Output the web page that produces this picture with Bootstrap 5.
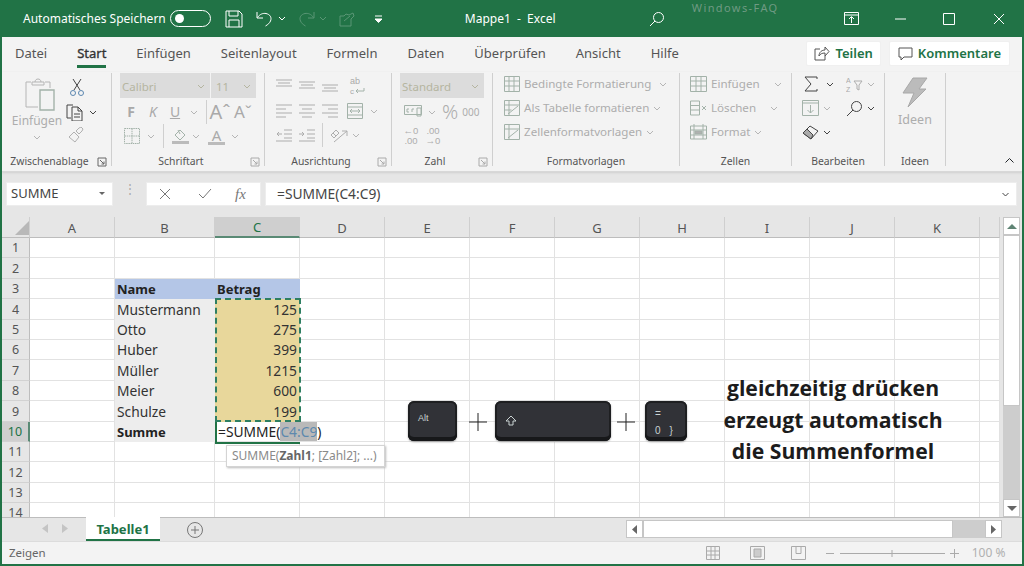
<!DOCTYPE html>
<html lang="de"><head><meta charset="utf-8"><title>Mappe1 - Excel</title>
<link href="https://cdn.jsdelivr.net/npm/bootstrap@5.3.0/dist/css/bootstrap.min.css" rel="stylesheet">
<style>
html,body{margin:0;width:1024px;height:566px;overflow:hidden;background:#e6e6e6}
body{font-family:"Noto Sans","Open Sans",sans-serif;font-size:13px;color:#444}
svg{flex:none;display:block;fill:none;stroke:currentColor;stroke-width:1}
.app{position:relative;width:1024px;height:566px;border:solid #217346;border-width:0 2px 2px 2px;overflow:hidden;background:#e6e6e6}
.tbar{height:37px;margin:0 -2px;background:#217346;color:#fff;padding-left:23px;font-size:12px}
.tgl{width:41px;height:17px;border:1px solid #fff;border-radius:9px;margin:0 14px 0 4px;padding-left:4px}
.knob{width:9px;height:9px;border-radius:50%;background:#fff}
.ttl{width:92px;margin:0 92px 0 82px;white-space:nowrap}
.wm{font-size:11px;letter-spacing:1.4px;width:92px;margin:-22px 60px 0 27px;color:#6f9a83;line-height:15px}
.tabs{height:35px;background:#f3f3f3;padding:0 12px 0 13px;gap:30px}
.tabs .nav-link{padding:0;color:#555;font-size:13px;line-height:19px;height:24px;margin-top:7px;border-bottom:3px solid transparent}
.tabs .nav-link.active{color:#333;border-bottom-color:#217346;-webkit-text-stroke:.35px #333}
.shr{background:#fff;border:1px solid #f0f0f0;border-radius:2px;color:#217346;font-size:13px;font-weight:600;height:25px;padding:0 8px;line-height:23px;display:flex;align-items:center;gap:5px}
.shr:hover{background:#fff;color:#217346}
.shr7{padding:0 7px}
.shgap{gap:8px;margin-top:4px}
.shic{color:#555}
.rib{height:100px;background:#f3f3f3;padding-top:1px;border-bottom:1px solid #d8d8d8;box-shadow:0 1px 2px #cfcfcf;position:relative}
.rgr{height:93px;border-right:1px solid #cfcfcf;display:flex;flex-direction:column;flex:none}
.g1{width:110px}.g2{width:153px;padding-left:8px}.g3{width:127px;padding-left:11px}.g4{width:101px;padding-left:8px}
.g5{width:187px;padding-left:11px}.g6{width:112px;padding-left:10px}.g7{width:93px}.g8{width:61px}
.rbd{flex:1 1 auto;min-height:0}
.up1{margin-top:-1px}
.rlb{display:flex;align-items:center;height:16px;margin-bottom:-4px;font-size:10.4px;color:#555;flex:none;margin-left:-8px}
.g1 .rlb,.g7 .rlb,.g8 .rlb{margin-left:0}.g3 .rlb{margin-left:-11px}.g5 .rlb{margin-left:-11px}.g6 .rlb{margin-left:-10px}
.rlb span{flex:1;text-align:center}
.lnc{margin-right:4px;color:#aaa;width:10px}
.lnd{color:#666}
.rr{display:flex;align-items:center;height:24px}
.mt2x{margin-top:2px}
.slc{height:25px;background:#dcdcdc;display:flex;align-items:center;justify-content:space-between;color:#b5b5a0;font-size:11.5px;padding:2px 5px 0 2px}
.fnt{width:90px;margin-right:1px}.fsz{width:45px;padding-left:5px}.std{width:84px;padding-left:2px}
.dis{color:#adadad}.ich{color:#a3b2a9}.brh{color:#b0b0b0}
.gl{color:#a9a9a9;width:22px;text-align:center;font-size:14px;line-height:20px}
.gla{font-size:20px;margin-left:2px}.glb{font-size:17px;margin-left:1px}
.sep{width:1px;height:24px;background:#cfcfcf;flex:none}
.chv{color:#b5b5b5}.chd{color:#444}
.tx{font-size:11.6px;color:#adadad;white-space:nowrap;margin-left:4px}
.pcol{width:60px;padding-left:10px}
.pic{margin:5px 0 0 6px}
.ptx{margin-top:1px;line-height:18px;font-size:12px}
.m5t{margin-top:5px}
.ctcol{margin-top:5px}
.cpr{margin-top:7px;gap:5px}
.brs{margin:6px 0 0 2px}
.flbar{height:3px;width:17px;background:#bbb}
.fca{margin-left:8px;width:17px;color:#aaa;font-size:15px;line-height:14px}
.pct{font-size:20px;line-height:20px;font-weight:300;margin-left:-1px}
.mil{font-size:10px;margin-left:4px}
.dec{font:9.5px/10.5px "Liberation Sans",sans-serif;width:22px;text-align:center}
.ide{font-size:12.5px;margin-top:3px}
.col38{width:38px}
.pl4{padding-left:4px}.pl2{padding-left:2px}
.g7 .rbd{padding-left:8px}
.fbar{height:45px;padding:10px 0 0 4px;background:#e6e6e6;align-items:flex-start}
.fbx{height:24px;background:#fff;border:1px solid #ededed;display:flex;align-items:center;flex:none}
.nmb{width:107px;padding:0 7px 0 4px;justify-content:space-between;color:#444}
.dts{width:33px;color:#aaa;font-size:12px;text-align:center;line-height:5px;padding-top:4px;flex:none}
.fxb{width:115px;padding-left:12px;color:#777}
.fxt{font:italic 15px "Liberation Serif",serif;margin-left:23px}
.fxk{margin-left:27px}
.fml{width:752px;margin-left:4px;padding:0 6px 0 11px;justify-content:space-between;color:#444;font-size:13.8px}
.gwrap{height:300px;background:#e6e6e6;overflow:hidden}
.sheet{table-layout:fixed;border-collapse:separate;border-spacing:0;width:998px;background:#fff;flex:none;font-size:13.8px;align-self:flex-start}
.sheet th,.sheet td{padding:1px 0 0;overflow:visible;white-space:nowrap;border-right:1px solid #e2e2e2;border-bottom:1px solid #e2e2e2;line-height:18px;color:#333}
.sheet thead th{background:#e6e6e6;height:21px;font-weight:400;text-align:center;color:#555;border-right:1px solid #cfcfcf;border-bottom:1px solid #bdbdbd;font-size:13px}
.sheet tbody th{background:#e6e6e6;font-weight:400;text-align:center;color:#555;border-right:1px solid #bdbdbd;border-bottom:1px solid #d2d2d2;font-size:12.5px}
.sheet thead th.acc{background:#cfcfcf;color:#217346;border-bottom:2px solid #5a8a75}
.sheet tbody th.acr{background:#cfcfcf;color:#217346;border-right:2px solid #5a8a75}
.cw28{width:28px}.cw85{width:85px}.cw100{width:100px}
.h20{height:20px}.h21{height:21px}
.crn{margin-left:13px}
.sheet .hdc{background:#b4c6e7;font-weight:700;padding-left:2px;border-color:#b4c6e7;color:#222;font-size:13px}
.sheet .nmc{background:#ededed;padding-left:2px;border-color:#ededed}
.sheet .nbd{font-weight:700;font-size:13px;color:#222}
.sheet .amt{background:#e8d79b;text-align:right;padding-right:2px;border-color:#e8d79b}
.vsb{width:17px;margin-left:3px;height:300px;background:#cdcdcd;display:flex;flex-direction:column;flex:none}
.sbb{background:#fff;border:1px solid #c6c6c6;display:flex;align-items:center;justify-content:center;flex:none}
.vbt{height:18px}.vth{height:171px;background:#fff;border:1px solid #c6c6c6;flex:none}
.sbar{height:24px;background:#e6e6e6;border-top:1px solid #bdbdbd}
.tarw{color:#bbb;width:20px;display:flex;justify-content:center;margin-top:6px}
.tar1{margin-left:33px}
.stab{width:74px;height:24px;margin:-1px 0 0 11px;background:#fff;border-bottom:2px solid #217346;color:#217346;font-weight:700;text-align:center;line-height:24px;flex:none;font-size:13px}
.pbt{margin:4px 0 0 27px;color:#777}
.hsb{display:flex;height:18px;width:376px;margin:2px 0 0 423px;background:#cdcdcd;flex:none}
.hsb .sbb{width:17px}.hth{width:310px;background:#fff;border:1px solid #c6c6c6;flex:none}
.stb{height:23px;background:#f3f3f3;border-top:1px solid #dcdcdc;color:#666;padding-left:7px;font-size:11.5px}
.stic{color:#aaa}
.sm1{margin-left:660px}.sm2{margin-left:30px}.sm3{margin-left:26px}.sm4{margin-left:20px}.sm5{margin-left:6px}.sm6{margin-left:5px}
.zpc{margin-left:13px;color:#b0b0b0;font-size:12px}
.ants{position:absolute;left:213px;top:298px;width:86px;height:124px;border:2px dashed #2f7f62}
.acell{position:absolute;left:213px;top:422px;width:111px;height:21px;white-space:nowrap;color:#222;font-size:13.8px;line-height:20px;padding-left:1px;border-left:2px solid #217346}
.acell::after{content:"";position:absolute;left:-2px;bottom:-1px;width:85px;height:2px;background:#217346}
.rng{background:#b9b9b9;color:#5d89ae}
.ttp{position:absolute;left:224px;top:445px;width:159px;height:22px;background:#fff;border:1px solid #d4d4d4;box-shadow:1px 1px 2px #bbb;font-size:12px;color:#8a8a8a;padding-left:5px;line-height:20px;white-space:nowrap}
.ttp b{color:#666}
.ky{position:absolute;top:401px;height:40px;background:#313237;border-radius:6px;box-shadow:0 1px 2px #999,inset 0 -4px 0 #17181a,inset 0 0 0 2px #1e1f21;color:#c9d2d2}
.k1{left:406px;width:49px;font:9px "Liberation Sans",sans-serif;padding:12px 0 0 10px}
.k2{left:493px;width:116px;padding:14px 0 0 10px}
.k3{left:643px;width:42px;font:10px "Liberation Sans",sans-serif;padding:6px 0 0 10px;line-height:14px}
.k3g{gap:9px;margin-top:3px}
.pls{position:absolute;top:413px;color:#222}
.p1{left:467px}.p2{left:615px}
.cpt{position:absolute;left:704px;top:372px;width:254px;color:#1c1c1c;font-family:"Open Sans",sans-serif;font-weight:700;font-size:21.2px;line-height:31.5px;text-align:center}
.rmar{margin-left:13px}.rma2{margin-left:11px}.rma3{margin-left:18px}.rm4{margin-left:4px}
.wm1{margin-left:36px}.wm2{margin-left:37px}.wm3{margin-left:38px}
.f3{opacity:.25}
.m12{margin:0 7px 0 6px}
.mg2{margin-left:2px}.mg3{margin-left:3px}.mg5{margin-left:6px}.mg8{margin-left:8px}.mg14{margin-left:14px}
.cb1{margin:0 8px 0 7px}
.cb2{margin:0 8px 0 4px}
.gap7{gap:7px}
.neg3{margin-left:-3px}
</style></head><body>
<svg width="0" height="0" class="position-absolute"><defs>
<symbol id="c" viewBox="0 0 8 5"><path d="M1 1l3 3 3-3"/></symbol>
<symbol id="l" viewBox="0 0 10 10"><path d="M1 1h8v8H1zM3 3l4 4M7 4.500V7H4.500"/></symbol>
</defs></svg>
<div class="app">
<div class="tbar d-flex align-items-center">
<span class="text-nowrap">Automatisches Speichern</span>
<div class="tgl d-flex align-items-center"><div class="knob"></div></div>
<svg width="18" height="18" viewBox="0 0 18 18"><path d="M1 1h13l3 3v13H1zM4 1v5h9V1M4 17v-7h10v7"/></svg>
<svg class="rmar" width="18" height="18" viewBox="0 0 18 18" stroke-width="1.300"><path d="M1 2v6h6M1.500 7.500C4 4 7 3 10 3.500c4 .8 6 4 4.500 7.500-.8 2-2.500 3.500-5 5"/></svg>
<svg class="rm4" width="8" height="5"><use href="#c"/></svg>
<svg class="rma2 f3" width="18" height="18" viewBox="0 0 18 18"><path d="M17 2v6h-6M16.500 7.500C14 4 11 3 8 3.500c-4 .8-6 4-4.500 7.500.8 2 2.500 3.500 5 5"/></svg>
<svg class="rm4 f3" width="8" height="5"><use href="#c"/></svg>
<svg class="rma2 f3" width="18" height="18" viewBox="0 0 18 18"><path d="M2 16V6h4l2-2 3 1 4-2 1 3-3 3v7zM6 11l6-5"/></svg>
<svg class="rma3" width="9" height="8" viewBox="0 0 9 8"><path d="M1 1h7"/><path d="M1 4h7L4.500 7.500z" fill="#fff"/></svg>
<span class="ttl">Mappe1&nbsp; - &nbsp;Excel</span>
<svg width="16" height="16" viewBox="0 0 16 16"><circle cx="9.500" cy="6.500" r="5"/><path d="M6 10l-5 5"/></svg>
<span class="wm text-nowrap">Windows-FAQ</span>
<svg width="15" height="13" viewBox="0 0 15 13"><path d="M.500.500h14v12H.500zM.500 3h14M7.500 11V5M5 7l2.500-2.500L10 7"/></svg>
<svg class="wm1" width="11" height="2" viewBox="0 0 11 2"><path d="M0 1h11"/></svg>
<svg class="wm2" width="12" height="12" viewBox="0 0 12 12"><path d="M.500.500h11v11H.500z"/></svg>
<svg class="wm3" width="12" height="12" viewBox="0 0 12 12"><path d="M1 1l10 10M11 1L1 11"/></svg>
</div>

<nav class="nav tabs align-items-start flex-nowrap">
<a class="nav-link" href="#">Datei</a><a class="nav-link active" href="#">Start</a><a class="nav-link" href="#">Einfügen</a><a class="nav-link" href="#">Seitenlayout</a><a class="nav-link" href="#">Formeln</a><a class="nav-link" href="#">Daten</a><a class="nav-link" href="#">Überprüfen</a><a class="nav-link" href="#">Ansicht</a><a class="nav-link" href="#">Hilfe</a>
<div class="d-flex ms-auto shgap">
<button class="btn shr shr7"><svg class="shic" width="16" height="15" viewBox="0 0 16 15"><path d="M6 3H1v11h10v-4M5 10c0-4 3-6 6-6V1l4 4.500L11 10V7c-3 0-5 1-6 3z"/></svg>Teilen</button>
<button class="btn shr"><svg class="shic" width="15" height="14" viewBox="0 0 15 14"><path d="M1 1h13v9H6l-3 3v-3H1z"/></svg>Kommentare</button>
</div></nav>

<div class="rib d-flex">
<section class="rgr g1"><div class="rbd d-flex">
<div class="d-flex flex-column align-items-center pcol">
<svg class="ich pic" width="30" height="33" viewBox="0 0 30 33"><path d="M6 4H1v25h12M20 4h5v6M7 4h12v3H7zM10 4c0-4 6-4 6 0" stroke="#b5b5b5"/><path d="M15 12h14v20H15z" stroke-width="1.400"/></svg>
<span class="dis ptx">Einfügen</span>
<svg class="chv m5t" width="8" height="5"><use href="#c"/></svg></div>
<div class="d-flex flex-column ps-1 ctcol">
<svg width="14" height="18" class="ms-1" viewBox="0 0 14 18"><path d="M3 1l7 11M11 1L4 12" stroke="#444"/><circle cx="3" cy="15" r="2.500" stroke="#5b87b0"/><circle cx="11" cy="15" r="2.500" stroke="#5b87b0"/></svg>
<div class="d-flex align-items-center cpr"><svg width="18" height="18" viewBox="0 0 18 18" stroke="#444"><path d="M7 2H1v13h4M6 4h6l4 4v10H6zM12 4v4h4M8 11h6M8 14h6"/></svg><svg class="chd" width="8" height="5"><use href="#c"/></svg></div>
<svg class="brh brs" width="17" height="16" viewBox="0 0 17 16"><path d="M1 10l5-5 5 5-4 5zM8 4l3-3 2-1 2 2-1 2-3 3z"/></svg>
</div></div>
<div class="rlb"><span>Zwischenablage</span><svg class="lnc lnd" width="10" height="10"><use href="#l"/></svg></div></section>

<section class="rgr g2"><div class="rbd">
<div class="d-flex"><div class="slc fnt">Calibri<svg width="8" height="5"><use href="#c"/></svg></div><div class="slc fsz">11<svg width="8" height="5"><use href="#c"/></svg></div></div>
<div class="rr mt2x"><span class="gl fw-bold">F</span><span class="gl fst-italic">K</span><span class="gl text-decoration-underline">U</span><svg class="chv cb2" width="8" height="5"><use href="#c"/></svg><span class="sep"></span>
<span class="gl gla">Aˆ</span><span class="gl glb">Aˇ</span></div>
<div class="rr"><svg class="ms-1 ich" width="16" height="16" viewBox="0 0 16 16"><path d="M.500.500h15v15H.500zM8 .500v15M.500 8h15" stroke-dasharray="1.500 .7"/></svg><svg class="chv cb1" width="8" height="5"><use href="#c"/></svg><span class="sep"></span>
<svg class="ich mg8" width="17" height="18" viewBox="0 0 17 18"><path d="M3 8l5-5 5 5-5 5zM6 3l2 4"/><path d="M0 14h17v3H0z" fill="#bbb" stroke="none"/></svg><svg class="chv mg3" width="8" height="5"><use href="#c"/></svg>
<span class="d-flex flex-column align-items-center fca">A<i class="d-block flbar"></i></span><svg class="chv mg5" width="8" height="5"><use href="#c"/></svg></div></div>
<div class="rlb"><span>Schriftart</span><svg class="lnc" width="10" height="10"><use href="#l"/></svg></div></section>

<section class="rgr g3"><div class="rbd">
<div class="rr gap7"><svg class="dis" width="16" height="16" viewBox="0 0 16 16"><path d="M0 3h16M2 6h12M0 9h16"/></svg><svg class="dis" width="16" height="16" viewBox="0 0 16 16"><path d="M0 5h16M2 8h12M0 11h16"/></svg><svg class="dis" width="16" height="16" viewBox="0 0 16 16"><path d="M0 8h16M2 11h12M0 14h16"/></svg>
<svg class="ms-1 ich" width="16" height="21" viewBox="0 0 16 21"><path d="M7 16h8v-3M7 16l2-2M7 16l2 2"/><text x="1" y="9" font-size="9" fill="#aaa" stroke="none" font-family="Liberation Sans">ab</text><text x="1" y="19" font-size="8" fill="#aaa" stroke="none" font-family="Liberation Sans">c</text></svg></div>
<div class="rr mt2x gap7"><svg class="dis" width="16" height="16" viewBox="0 0 16 16"><path d="M0 2h16M0 6h10M0 10h16M0 14h10"/></svg><svg class="dis" width="16" height="16" viewBox="0 0 16 16"><path d="M0 2h16M3 6h10M0 10h16M3 14h10"/></svg><svg class="dis" width="16" height="16" viewBox="0 0 16 16"><path d="M0 2h16M6 6h10M0 10h16M6 14h10"/></svg>
<svg class="ich mg2" width="16" height="16" viewBox="0 0 16 16"><path d="M.500.500h15v15H.500zM.500 4h15M.500 12h15M3 8h10M3 8l2-2M3 8l2 2M13 8l-2-2M13 8l-2 2"/></svg><svg class="chv" width="8" height="5"><use href="#c"/></svg></div>
<div class="rr gap7"><svg class="dis" width="16" height="16" viewBox="0 0 16 16"><path d="M8 3h8M8 7h8M8 11h8M1 7h5M1 7l2-2M1 7l2 2M0 14h16"/></svg><svg class="dis" width="16" height="16" viewBox="0 0 16 16"><path d="M8 3h8M8 7h8M8 11h8M0 7h5M5 7L3 5M5 7L3 9M0 14h16"/></svg><span class="sep"></span>
<svg class="dis" width="18" height="16" viewBox="0 0 18 16"><path d="M4 15L17 4M17 4h-5M17 4v5M1 8l5-5 3 3-5 5zM3 6l3 3"/></svg><svg class="chv neg3" width="8" height="5"><use href="#c"/></svg></div></div>
<div class="rlb"><span>Ausrichtung</span><svg class="lnc" width="10" height="10"><use href="#l"/></svg></div></section>

<section class="rgr g4"><div class="rbd">
<div class="slc std">Standard<svg width="8" height="5"><use href="#c"/></svg></div>
<div class="rr mt2x"><svg class="ich ms-1" width="18" height="16" viewBox="0 0 18 16"><path d="M.500 1.500h17v9H.500zM5 5H3v3h2M8 8V5h2M13 4v8h4V4z"/></svg><svg class="chv m12" width="8" height="5"><use href="#c"/></svg><span class="dis pct">%</span><span class="dis mil">000</span></div>
<div class="rr"><span class="dis dec">←0<br>.00</span><span class="dis dec">.00<br>→0</span></div></div>
<div class="rlb"><span>Zahl</span><svg class="lnc" width="10" height="10"><use href="#l"/></svg></div></section>

<section class="rgr g5"><div class="rbd up1">
<div class="rr"><svg class="ich" width="16" height="16" viewBox="0 0 16 16"><path d="M.500.500h15v15H.500zM.500 5h15M.500 10h15M5 .500v15M10 .500v15"/></svg><span class="tx">Bedingte Formatierung</span><svg class="chv ms-2" width="8" height="5"><use href="#c"/></svg></div>
<div class="rr"><svg class="ich" width="16" height="16" viewBox="0 0 16 16"><path d="M.500.500h15v15H.500zM.500 5h15M.500 10h7M5 .500v15M4 14l10-8"/></svg><span class="tx">Als Tabelle formatieren</span><svg class="chv ms-1" width="8" height="5"><use href="#c"/></svg></div>
<div class="rr"><svg class="ich" width="16" height="16" viewBox="0 0 16 16"><path d="M.500.500h15v15H.500zM.500 5h15M5 .500v15M4 14l10-8"/></svg><span class="tx">Zellenformatvorlagen</span><svg class="chv ms-1" width="8" height="5"><use href="#c"/></svg></div></div>
<div class="rlb"><span>Formatvorlagen</span></div></section>

<section class="rgr g6"><div class="rbd up1">
<div class="rr"><svg class="ich" width="17" height="16" viewBox="0 0 17 16"><path d="M.500.500h16v15H.500zM.500 5h16M.500 10h16M6 .500v15M11 .500v15"/></svg><span class="tx">Einfügen</span><svg class="chv mg14" width="8" height="5"><use href="#c"/></svg></div>
<div class="rr"><svg class="ich" width="17" height="16" viewBox="0 0 17 16"><path d="M.500 1h9v14h-9zM.500 5.500h9M.500 10h9M12 6l4 4M16 6l-4 4"/></svg><span class="tx">Löschen</span><svg class="chv mg14" width="8" height="5"><use href="#c"/></svg></div>
<div class="rr"><svg class="ich" width="17" height="16" viewBox="0 0 17 16"><path d="M.500 2h16v13H.500zM4 0v15M13 0v15M.500 6h16M.500 11h16"/><path d="M5 7h7v3H5z" fill="#b0b0b0"/></svg><span class="tx">Format</span><svg class="chv ms-1" width="8" height="5"><use href="#c"/></svg></div></div>
<div class="rlb"><span>Zellen</span></div></section>

<section class="rgr g7"><div class="rbd up1">
<div class="rr"><span class="d-flex align-items-center col38 pl4"><svg width="14" height="16" viewBox="0 0 14 16" stroke="#333"><path d="M13 3V1H1l6 7-6 7h12v-2"/></svg><svg class="chd ms-2" width="8" height="5"><use href="#c"/></svg></span><svg class="ms-2 dis" width="17" height="17" viewBox="0 0 17 17"><path d="M8 5h8l-3 4v5l-2-1V9z"/><text x="0" y="6.500" font-size="7" fill="#aaa" stroke="none" font-family="Liberation Sans">A</text><text x="0" y="16" font-size="7" fill="#aaa" stroke="none" font-family="Liberation Sans">Z</text></svg><svg class="chv ms-1" width="8" height="5"><use href="#c"/></svg></div>
<div class="rr"><span class="d-flex align-items-center col38 pl2"><svg class="ich" width="17" height="16" viewBox="0 0 17 16"><path d="M.500.500h16v15H.500zM.500 3h16M8.500 5v8M5.500 10l3 3 3-3"/></svg><svg class="chv ms-1" width="8" height="5"><use href="#c"/></svg></span><svg class="ms-2" width="17" height="17" viewBox="0 0 17 17" stroke="#444"><circle cx="10.500" cy="6.500" r="5"/><path d="M7 10l-6 6"/></svg><svg class="chd ms-1" width="8" height="5"><use href="#c"/></svg></div>
<div class="rr"><span class="d-flex align-items-center pl2"><svg width="17" height="15" viewBox="0 0 17 15" stroke="#999"><path d="M1 8l7-7 8 5-7 8z"/><path d="M1 8l4-4 6 6-2 4z" fill="#aaa"/></svg><svg class="chd ms-1" width="8" height="5"><use href="#c"/></svg></span></div></div>
<div class="rlb"><span>Bearbeiten</span></div></section>

<section class="rgr g8"><div class="rbd d-flex flex-column align-items-center">
<svg class="mt-1" width="26" height="31" viewBox="0 0 26 31"><path d="M11 1h14l-8 11h7L6 30l6-14H1z" fill="#bbb" stroke="#a8a8a8"/></svg>
<span class="dis ide">Ideen</span></div>
<div class="rlb"><span>Ideen</span></div></section>

<div class="flex-grow-1 d-flex justify-content-end align-items-end pe-2 pb-2"><svg class="text-dark" width="9" height="5" viewBox="0 0 9 5"><path d="M.500 4.500l4-4 4 4"/></svg></div>
</div>

<div class="fbar d-flex">
<div class="fbx nmb">SUMME<svg width="6" height="4" viewBox="0 0 6 4"><path d="M0 0h6L3 3z" fill="#666" stroke="none"/></svg></div>
<div class="dts">⋮</div>
<div class="fbx fxb"><svg width="12" height="12" viewBox="0 0 12 12" stroke-width="1.800"><path d="M1 1l10 10M11 1L1 11"/></svg><svg class="fxk" width="14" height="12" viewBox="0 0 14 12" stroke-width="2.200"><path d="M1 6l4 4 8-9"/></svg><span class="fxt">fx</span></div>
<div class="fbx fml">=SUMME(C4:C9)<svg width="9" height="5"><use href="#c"/></svg></div>
</div>

<div class="gwrap d-flex">
<table class="sheet"><colgroup><col class="cw28"><col class="cw85"><col class="cw100"><col class="cw85"><col class="cw85"><col class="cw85"><col class="cw85"><col class="cw85"><col class="cw85"><col class="cw85"><col class="cw85"><col class="cw85"><col></colgroup>
<thead><tr><th><svg class="crn" width="14" height="14" viewBox="0 0 14 14"><path d="M14 0v14H0z" fill="#b8b8b8" stroke="none"/></svg></th><th>A</th><th>B</th><th class="acc">C</th><th>D</th><th>E</th><th>F</th><th>G</th><th>H</th><th>I</th><th>J</th><th>K</th><th></th></tr></thead>
<tbody>
<tr class="h20"><th>1</th><td></td><td></td><td></td><td></td><td></td><td></td><td></td><td></td><td></td><td></td><td></td><td></td></tr>
<tr class="h21"><th>2</th><td></td><td></td><td></td><td></td><td></td><td></td><td></td><td></td><td></td><td></td><td></td><td></td></tr>
<tr class="h20"><th>3</th><td></td><td class="hdc">Name</td><td class="hdc">Betrag</td><td></td><td></td><td></td><td></td><td></td><td></td><td></td><td></td><td></td></tr>
<tr class="h21"><th>4</th><td></td><td class="nmc">Mustermann</td><td class="amt">125</td><td></td><td></td><td></td><td></td><td></td><td></td><td></td><td></td><td></td></tr>
<tr class="h20"><th>5</th><td></td><td class="nmc">Otto</td><td class="amt">275</td><td></td><td></td><td></td><td></td><td></td><td></td><td></td><td></td><td></td></tr>
<tr class="h20"><th>6</th><td></td><td class="nmc">Huber</td><td class="amt">399</td><td></td><td></td><td></td><td></td><td></td><td></td><td></td><td></td><td></td></tr>
<tr class="h21"><th>7</th><td></td><td class="nmc">Müller</td><td class="amt">1215</td><td></td><td></td><td></td><td></td><td></td><td></td><td></td><td></td><td></td></tr>
<tr class="h20"><th>8</th><td></td><td class="nmc">Meier</td><td class="amt">600</td><td></td><td></td><td></td><td></td><td></td><td></td><td></td><td></td><td></td></tr>
<tr class="h21"><th>9</th><td></td><td class="nmc">Schulze</td><td class="amt">199</td><td></td><td></td><td></td><td></td><td></td><td></td><td></td><td></td><td></td></tr>
<tr class="h20"><th class="acr">10</th><td></td><td class="nmc nbd">Summe</td><td></td><td></td><td></td><td></td><td></td><td></td><td></td><td></td><td></td><td></td></tr>
<tr class="h20"><th>11</th><td></td><td></td><td></td><td></td><td></td><td></td><td></td><td></td><td></td><td></td><td></td><td></td></tr>
<tr class="h21"><th>12</th><td></td><td></td><td></td><td></td><td></td><td></td><td></td><td></td><td></td><td></td><td></td><td></td></tr>
<tr class="h20"><th>13</th><td></td><td></td><td></td><td></td><td></td><td></td><td></td><td></td><td></td><td></td><td></td><td></td></tr>
<tr class="h20"><th>14</th><td></td><td></td><td></td><td></td><td></td><td></td><td></td><td></td><td></td><td></td><td></td><td></td></tr>
</tbody></table>
<div class="vsb"><div class="sbb vbt"><svg width="10" height="5" viewBox="0 0 10 5"><path d="M0 5h10L5 0z" fill="#5f8474" stroke="none"/></svg></div><div class="vth"></div><div class="flex-grow-1"></div><div class="sbb vbt"><svg width="10" height="5" viewBox="0 0 10 5"><path d="M0 0h10L5 5z" fill="#666" stroke="none"/></svg></div></div>
</div>

<div class="sbar d-flex align-items-start">
<span class="tarw tar1"><svg width="6" height="9" viewBox="0 0 6 9"><path d="M6 0v9L0 4.500z" fill="#c4c4c4" stroke="none"/></svg></span>
<span class="tarw"><svg width="6" height="9" viewBox="0 0 6 9"><path d="M0 0v9l6-4.500z" fill="#c4c4c4" stroke="none"/></svg></span>
<div class="stab">Tabelle1</div>
<svg class="pbt" width="16" height="16" viewBox="0 0 16 16"><circle cx="8" cy="8" r="7.500"/><path d="M8 4v8M4 8h8"/></svg>
<div class="hsb"><div class="sbb"><svg width="5" height="9" viewBox="0 0 5 9"><path d="M5 0v9L0 4.500z" fill="#666" stroke="none"/></svg></div><div class="hth"></div><div class="flex-grow-1"></div><div class="sbb"><svg width="5" height="9" viewBox="0 0 5 9"><path d="M0 0v9l5-4.500z" fill="#666" stroke="none"/></svg></div></div>
</div>

<div class="stb d-flex align-items-center">
<span>Zeigen</span>
<svg class="stic sm1" width="14" height="14" viewBox="0 0 14 14"><path d="M.500.500h13v13H.500zM5 .500v13M9 .500v13M.500 5h13M.500 9h13"/></svg>
<svg class="stic sm2" width="15" height="14" viewBox="0 0 15 14"><path d="M.500.500h14v13H.500z"/><path d="M4 3h7v8H4z" fill="#ccc"/></svg>
<svg class="stic sm3" width="15" height="14" viewBox="0 0 15 14"><path d="M.500.500h14v13H.500zM5 .500v7h5v-7"/></svg>
<svg class="stic sm4" width="8" height="1" viewBox="0 0 8 1"><path d="M0 .500h8"/></svg>
<svg class="stic sm5" width="105" height="9" viewBox="0 0 105 9"><path d="M0 4.500h105M52 1v7"/></svg>
<svg class="stic sm6" width="9" height="9" viewBox="0 0 9 9"><path d="M0 4.500h9M4.500 0v9"/></svg>
<span class="zpc">100 %</span>
</div>

<div class="ants"></div>
<div class="acell">=SUMME(<span class="rng">C4:C9</span>)</div>
<div class="ttp">SUMME(<b>Zahl1</b>; [Zahl2]; ...)</div>
<div class="ky k1">Alt</div>
<svg class="pls p1" width="18" height="18" viewBox="0 0 18 18" stroke-width="1.600"><path d="M0 9h18M9 0v18"/></svg>
<div class="ky k2"><svg width="12" height="12" viewBox="0 0 12 12" stroke-width="1.400"><path d="M6 1L1 6h3v4h4V6h3z"/></svg></div>
<svg class="pls p2" width="18" height="18" viewBox="0 0 18 18" stroke-width="1.600"><path d="M0 9h18M9 0v18"/></svg>
<div class="ky k3">=<div class="d-flex k3g"><span>0</span><span>}</span></div></div>
<div class="cpt">gleichzeitig drücken<br>erzeugt automatisch<br>die Summenformel</div>
</div>
</body></html>
